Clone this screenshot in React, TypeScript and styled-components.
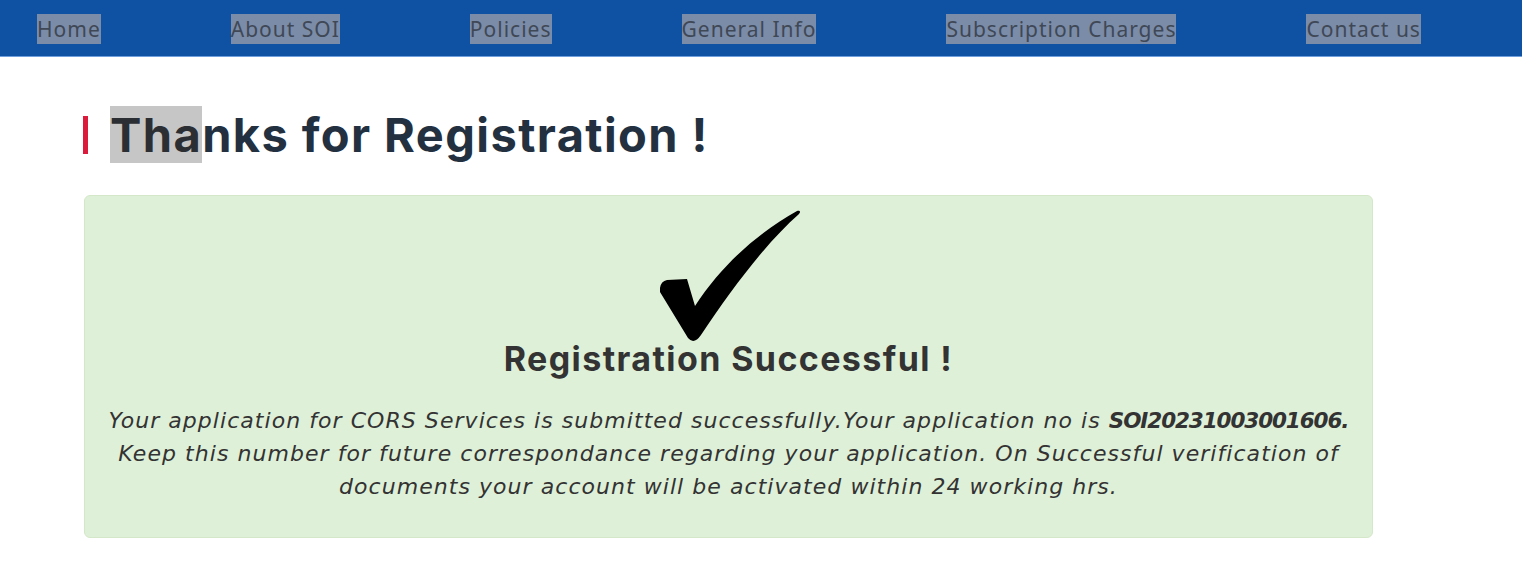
import React from "react";
import styled, { createGlobalStyle } from "styled-components";

const Global = createGlobalStyle`
  html, body { margin: 0; padding: 0; background: #ffffff; }
  body { font-family: "Open Sans", "Noto Sans", sans-serif; }
`;

const NavBar = styled.nav`
  height: 56px;
  background: #0f51a3;
  border-bottom: 1px solid #6f9fdc;
  display: flex;
  align-items: center;
  padding-left: 37px;
  gap: 130px;
`;

const NavItem = styled.a`
  font-family: "Noto Sans", sans-serif;
  font-size: 21px;
  letter-spacing: 1px;
  line-height: 30px;
  color: #3f4856;
  background: #7b8ca8;
  text-decoration: none;
  white-space: nowrap;
  margin-top: 1px;
`;

const Main = styled.main`
  padding: 50px 0 0 84px;
  width: 1289px;
`;

const Heading = styled.h1`
  margin: 0 0 32px -1px;
  display: flex;
  align-items: center;
  gap: 22px;
  font-family: "Inter", sans-serif;
  font-weight: 700;
  font-size: 47px;
  line-height: 56px;
  color: #22303f;
  letter-spacing: 1.4px;
`;

const Bar = styled.span`
  width: 5px;
  height: 38px;
  background: #dc1a3c;
  flex: none;
`;

const Selected = styled.span`
  background: #c6c6c6;
  color: #2b2e33;
`;

const Card = styled.section`
  background: #dff0d8;
  border: 1px solid #d4e7c8;
  border-radius: 6px;
  padding: 12px 10px 34px;
  display: flex;
  flex-direction: column;
  align-items: center;
  text-align: center;
`;

const Check = styled.svg`
  display: block;
  width: 145px;
  height: 135px;
  margin-left: -2px;
`;

const Title = styled.h2`
  margin: -3px 0 26px;
  font-family: "Inter", sans-serif;
  font-weight: 700;
  font-size: 34px;
  line-height: 38px;
  color: #333333;
  letter-spacing: 1.4px;
`;

const Message = styled.p`
  margin: 0;
  font-family: "DejaVu Sans", sans-serif;
  font-style: italic;
  font-weight: 400;
  font-size: 22px;
  letter-spacing: 1.05px;
  line-height: 33px;
  color: #333333;
  white-space: nowrap;
`;

const AppNo = styled.b`
  font-weight: 700;
  font-size: 21.5px;
  letter-spacing: -1.1px;
`;

const navItems = [
  "Home",
  "About SOI",
  "Policies",
  "General Info",
  "Subscription Charges",
  "Contact us",
];

export default function App() {
  return (
    <>
      <Global />
      <NavBar>
        {navItems.map((n) => (
          <NavItem key={n} href="#">
            {n}
          </NavItem>
        ))}
      </NavBar>
      <Main>
        <Heading>
          <Bar />
          <span>
            <Selected>Tha</Selected>nks for Registration !
          </span>
        </Heading>
        <Card>
          <Check viewBox="0 0 145 135">
            <path
              d="M5 80 Q6 73 12 72 L32 71 L40 98 C70 52 108 22 142 3 C145 2 146 4 144 6 C110 36 76 82 46 127 Q39 137 33 130 L5 84 Z"
              fill="#000"
            />
          </Check>
          <Title>Registration Successful !</Title>
          <Message>
            Your application for CORS Services is submitted successfully.Your
            application no is <AppNo>SOI20231003001606.</AppNo>
            <br />
            Keep this number for future correspondance regarding your
            application. On Successful verification of
            <br />
            documents your account will be activated within 24 working hrs.
          </Message>
        </Card>
      </Main>
    </>
  );
}
